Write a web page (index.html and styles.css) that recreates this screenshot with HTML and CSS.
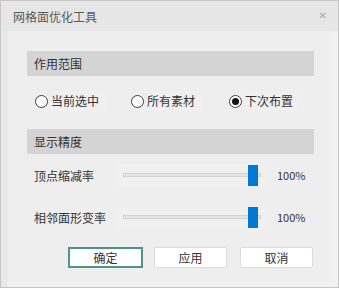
FILE: index.html
```html
<!DOCTYPE html>
<html lang="zh">
<head>
    <meta charset="UTF-8">
    <meta name="viewport" content="width=device-width, initial-scale=1.0">
    <title>网格面优化工具</title>
    <link rel="stylesheet" href="styles.css">
</head>
<body>
    <div class="dialog">
        <div class="titlebar">
            <span class="title">网格面优化工具</span>
            <span class="close">&#x2715;</span>
        </div>
        <div class="frame">
            <div class="panel">
                <div class="section-head">作用范围</div>
                <div class="radio-row">
                    <div class="radio r1"><span class="dot"></span><span class="rlabel">当前选中</span></div>
                    <div class="radio r2"><span class="dot"></span><span class="rlabel">所有素材</span></div>
                    <div class="radio r3"><span class="dot checked"></span><span class="rlabel">下次布置</span></div>
                </div>

                <div class="section-head second">显示精度</div>
                <div class="slider-row first">
                    <span class="slabel">顶点缩减率</span>
                    <div class="slider">
                        <div class="track"></div>
                        <div class="thumb"></div>
                    </div>
                    <span class="value">100%</span>
                </div>
                <div class="slider-row">
                    <span class="slabel">相邻面形变率</span>
                    <div class="slider">
                        <div class="track"></div>
                        <div class="thumb"></div>
                    </div>
                    <span class="value">100%</span>
                </div>

                <div class="buttons">
                    <button class="btn ok">确定</button>
                    <button class="btn apply">应用</button>
                    <button class="btn">取消</button>
                </div>
            </div>
        </div>
    </div>
</body>
</html>
```

FILE: styles.css
```css
body {
    margin: 0;
    font-family: "Noto Sans CJK SC", "Noto Sans", sans-serif;
    font-size: 12px;
    color: #333;
    background-color: #ffffff;
}

.dialog {
    width: 337px;
    height: 286px;
    border: 1px solid #c6c6c6;
    background-color: #f1f1f1;
}

.titlebar {
    height: 30px;
    background-color: #e6e6e6;
    display: flex;
    align-items: center;
    justify-content: space-between;
    padding: 0 11px 0 12px;
}

.title {
    color: #5a5a5a;
    font-size: 12px;
    line-height: 30px;
    padding-top: 1px;
}

.close {
    color: #a8a8a8;
    font-size: 10px;
    font-family: "DejaVu Sans", sans-serif;
    padding-bottom: 1px;
}

.frame {
    border-left: 7px solid #e9e9e9;
    padding: 0 6px 6px 0;
}

.panel {
    height: 250px;
    background-color: #eeeeee;
    padding: 20px 18px 0 19px;
    box-sizing: border-box;
}

.section-head {
    height: 25px;
    line-height: 25px;
    background-color: #d4d4d4;
    padding-left: 7px;
    color: #333;
}

.section-head.second {
    margin-top: 16px;
}

.radio-row {
    display: flex;
    height: 24px;
    align-items: center;
    margin-top: 13px;
    padding-left: 8px;
}

.radio {
    display: flex;
    align-items: center;
}

.r1 { width: 96px; }
.r2 { width: 98px; }

.dot {
    width: 11px;
    height: 11px;
    border: 1px solid #3c3c3c;
    border-radius: 50%;
    background-color: #fff;
    position: relative;
    flex-shrink: 0;
}

.dot.checked::after {
    content: "";
    position: absolute;
    left: 2px;
    top: 2px;
    width: 7px;
    height: 7px;
    border-radius: 50%;
    background-color: #111;
}

.rlabel {
    margin-left: 3px;
    padding-right: 6px;
    background-color: #f0f0f0;
    line-height: 20px;
}

.slider-row {
    display: flex;
    align-items: center;
    height: 24px;
    margin-top: 18px;
}

.slider-row.first {
    margin-top: 9px;
}

.slabel {
    width: 81px;
    padding-left: 7px;
}

.slider {
    width: 152px;
    height: 23px;
    background-color: #f0f0f0;
    display: flex;
    align-items: center;
    padding-left: 8px;
    box-sizing: border-box;
    position: relative;
}

.track {
    width: 136px;
    height: 2px;
    background-color: #e4e4e4;
    border: 1px solid #d2d2d2;
}

.thumb {
    position: absolute;
    left: 133px;
    top: 1px;
    width: 10px;
    height: 21px;
    background-color: #0078d7;
}

.value {
    margin-left: 10px;
    font-size: 11px;
    color: #333;
}

.buttons {
    display: flex;
    justify-content: flex-end;
    margin-top: 18px;
    padding-right: 1px;
}

.btn {
    width: 73px;
    height: 21px;
    margin-left: 13px;
    background-color: #ffffff;
    border: 1px solid #dcdcdc;
    border-radius: 2px;
    font-family: inherit;
    font-size: 12px;
    color: #333;
    padding: 0;
}

.btn.ok {
    width: 75px;
    margin-left: 0;
    border: 2px solid #4a9585;
    border-radius: 0;
}

.btn.apply {
    margin-left: 11px;
}
```
